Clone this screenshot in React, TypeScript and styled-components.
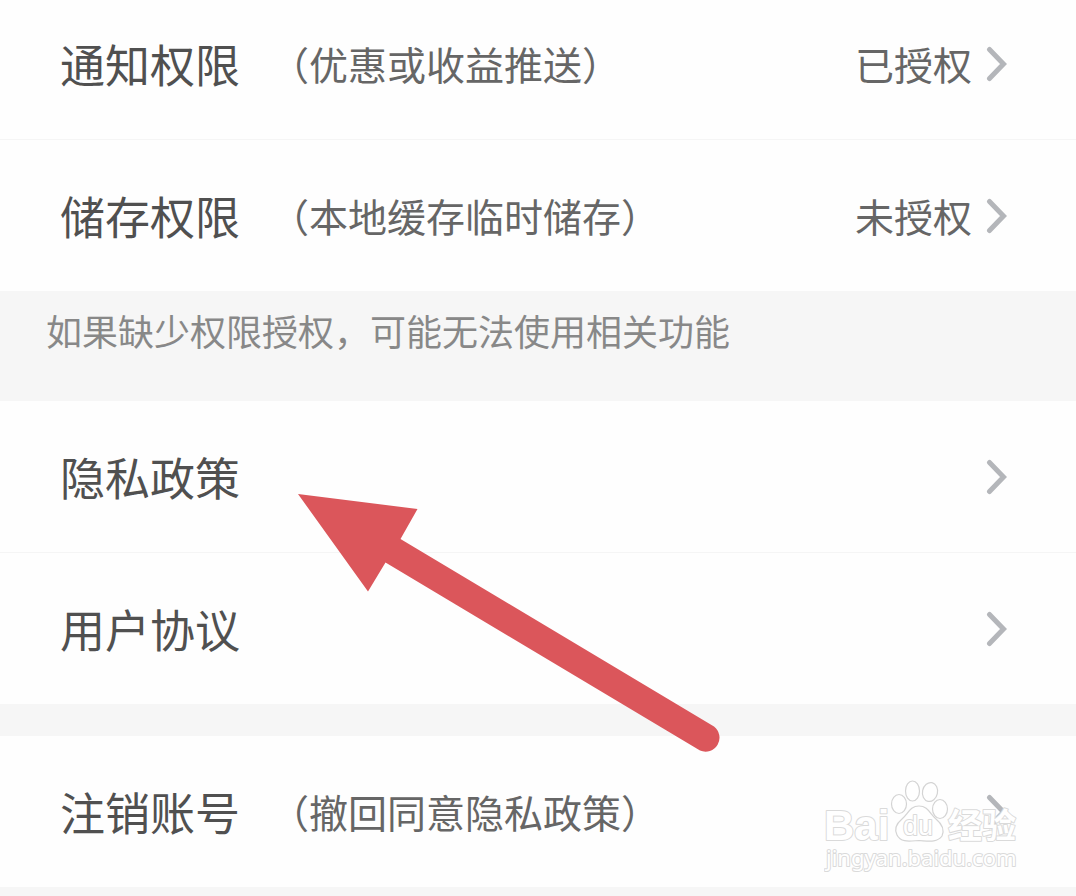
import React from 'react';
import styled, { createGlobalStyle } from 'styled-components';

const GlobalStyle = createGlobalStyle`
  * { box-sizing: border-box; }
  body {
    margin: 0;
    background: #f6f6f6;
    font-family: "Noto Sans CJK SC", "Noto Sans", sans-serif;
  }
`;

const Page = styled.main`
  position: relative;
  min-height: 100vh;
  overflow: hidden;
  background: #f6f6f6;
`;

const Group = styled.ul`
  list-style: none;
  margin: 0;
  padding: 0;
  background: #fefefe;
`;

const Item = styled.li`
  & + & {
    border-top: 1px solid #f5f5f5;
  }
`;

const RowLink = styled.a<{ $clipped?: boolean }>`
  display: flex;
  align-items: center;
  height: ${(p) => (p.$clipped ? 139 : 151)}px;
  padding: 0 69px ${(p) => (p.$clipped ? 12 : 0)}px 60px;
  color: #555;
  text-decoration: none;
  white-space: nowrap;
`;

const Title = styled.span`
  font-size: 45px;
  color: #505050;
`;

const Detail = styled.span`
  padding-bottom: 2px;
  font-size: 39px;
  color: #666;
`;

const Hint = styled(Detail)`
  margin-left: 30px;
`;

const End = styled.span`
  display: flex;
  align-items: center;
  gap: 14px;
  margin-left: auto;
`;

const Notice = styled.p`
  margin: 0;
  padding: 13px 46px 45px;
  font-size: 36px;
  line-height: 52px;
  color: #888;
`;

const Gap = styled.div`
  height: 32px;
`;

const Pointer = styled.svg`
  position: absolute;
  top: 490px;
  left: 295px;
  pointer-events: none;
`;

const Watermark = styled.svg`
  position: absolute;
  top: 776px;
  right: 52px;
  pointer-events: none;
`;

const Chevron = () => (
  <svg width="21" height="36" viewBox="0 0 21 36" fill="none" aria-hidden="true">
    <path d="M3.5 3.5 L17.5 18 L3.5 32.5" stroke="#b4b6ba" strokeWidth="5" strokeLinecap="round" strokeLinejoin="miter" />
  </svg>
);

type RowProps = { title: string; hint?: string; status?: string; clipped?: boolean };

const Row = ({ title, hint, status, clipped }: RowProps) => (
  <Item>
    <RowLink href="#" $clipped={clipped}>
      <Title>{title}</Title>
      {hint && <Hint>{hint}</Hint>}
      <End>
        {status && <Detail>{status}</Detail>}
        <Chevron />
      </End>
    </RowLink>
  </Item>
);

const BaiduMark = () => (
  <Watermark width="200" height="102" viewBox="0 0 200 102" aria-label="Baidu 经验">
    <g fill="#fff" fillOpacity="0.9" stroke="#d4d4d4" strokeWidth="1.2">
      <ellipse cx="75" cy="28" rx="7.500" ry="9.500" />
      <ellipse cx="88.500" cy="15" rx="7" ry="10" />
      <ellipse cx="106" cy="16" rx="7.500" ry="9.500" transform="rotate(12 106 16)" />
      <ellipse cx="116" cy="33" rx="7.500" ry="9.500" />
      <path d="M95 30 C86 30 84 38 78 43 C72 48 70 53 73 59 C77 67 86 65 95 64.500 C104 65 113 67 118 60 C121 53 118 48 112 43 C106 38 104 30 95 30 Z" />
    </g>
    <g fill="#fff" stroke="#dadada" strokeWidth="2" paintOrder="stroke" strokeLinejoin="round" fontWeight="700">
      <text x="0" y="64" fontSize="42" fontFamily="Liberation Sans, sans-serif">Bai</text>
      <text x="79" y="59" fontSize="27" fontWeight="400" fontFamily="Liberation Sans, sans-serif">du</text>
      <text x="124" y="62" fontSize="34" fontFamily="Liberation Sans, Noto Sans CJK SC, sans-serif">经验</text>
      <text x="2" y="90" fontSize="22" fontWeight="400" fontFamily="Noto Sans, sans-serif">jingyan.baidu.com</text>
    </g>
  </Watermark>
);

export default function App() {
  return (
    <>
      <GlobalStyle />
      <Page>
        <Group>
          <Row title="通知权限" hint="（优惠或收益推送）" status="已授权" clipped />
          <Row title="储存权限" hint="（本地缓存临时储存）" status="未授权" />
        </Group>
        <Notice>如果缺少权限授权，可能无法使用相关功能</Notice>
        <Group>
          <Row title="隐私政策" />
          <Row title="用户协议" />
        </Group>
        <Gap />
        <Group>
          <Row title="注销账号" hint="（撤回同意隐私政策）" />
        </Group>
        <Pointer width="430" height="266" viewBox="295 490 430 266" aria-hidden="true">
          <path
            d="M298 494 L417.500 509 L400.500 539 L714 726.500 A14 14 0 0 1 700 750.500 L385.500 562.500 L368 591.500 Z"
            fill="#db565b"
          />
        </Pointer>
        <BaiduMark />
      </Page>
    </>
  );
}
